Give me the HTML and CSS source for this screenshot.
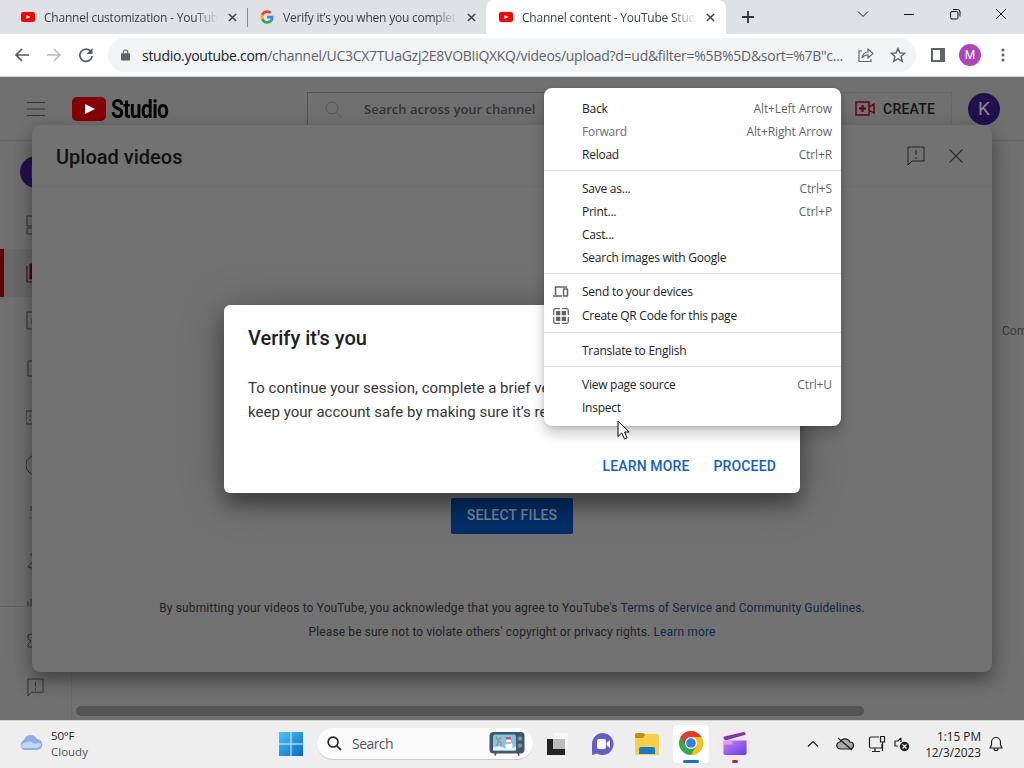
FILE: index.html
```html
<!DOCTYPE html>
<html lang="en"><head><meta charset="utf-8"><title>Channel content - YouTube Studio</title><link rel="stylesheet" href="styles.css"></head>
<body>
<svg class="defs" width="0" height="0"><defs>
<symbol id="yt" viewBox="0 0 34 24"><rect width="34" height="24" rx="5" fill="currentColor"/><path class="play" d="M13 7v10l10-5z"/></symbol>
<symbol id="x" viewBox="0 0 10 10"><path d="M1 1l8 8M9 1l-8 8"/></symbol>
<symbol id="feedback" viewBox="0 0 18 20"><path d="M1 1h16v14H5l-4 4zM9 4v5M9 11v2"/></symbol>
</defs></svg>
<header class="tabs">
 <div class="tab t1"><svg class="fav"><use href="#yt"/></svg><span class="title">Channel customization - YouTube Studio</span><svg class="close"><use href="#x"/></svg></div>
 <div class="tab t2"><svg class="fav g" viewBox="0 0 48 48"><path fill="#4285f4" d="M46 24.500c0-1.600-.1-3.100-.4-4.500H24v9h12.400a11 11 0 0 1-4.700 7v6h7.700C43.600 38 46 32 46 24.500"/><path fill="#34a853" d="M24 47c6.300 0 11.600-2 15.400-5.600l-7.700-5.900C27 39 16 39 12 28H4v6a23 23 0 0 0 20 13"/><path fill="#fbbc05" d="M12 28a14 14 0 0 1 0-8.700v-6H4a23 23 0 0 0 0 20.700z"/><path fill="#ea4335" d="M24 10c3.500 0 6.600 1.200 9 3.500l6.700-6.700C35.600 3 30.200 1 24 1A23 23 0 0 0 4 13.300l8 6C14 14 18.500 10 24 10"/></svg><span class="title">Verify it’s you when you complete sensitive</span><svg class="close"><use href="#x"/></svg></div>
 <div class="tab t3"><svg class="fav"><use href="#yt"/></svg><span class="title">Channel content - YouTube Studio</span><svg class="close"><use href="#x"/></svg></div>
 <svg class="plus" viewBox="0 0 12 12"><path d="M6 0v12M0 6h12"/></svg>
 <div class="winbtns"><svg viewBox="0 0 12 12"><path d="M1 3.500l5 5 5-5"/></svg><svg viewBox="0 0 12 12"><path d="M1 6.500h10"/></svg><svg viewBox="0 0 12 12"><rect x="1.500" y="3.500" width="7.500" height="7.500" rx="1.500"/><path d="M4 1.500h4.500q2.500 0 2.500 2.500v4.500"/></svg><svg viewBox="0 0 12 12"><path d="M1 1l10 10M11 1L1 11"/></svg></div>
</header>
<div class="toolbar">
 <div class="nav"><svg viewBox="0 0 16 16"><path d="M15 8H2M8 2L2 8l6 6"/></svg><svg class="off" viewBox="0 0 16 16"><path d="M1 8h13M8 2l6 6-6 6"/></svg><svg viewBox="0 0 16 16"><path d="M13 4.500A6.200 6.200 0 1 0 14.200 9"/><path d="M14.500 1v6h-6z" fill="#55585c" stroke="none"/></svg></div>
 <div class="url"><svg class="lock" viewBox="0 0 10 12"><path d="M1 4h8q1 0 1 1v6q0 1-1 1H1q-1 0-1-1V5q0-1 1-1z" fill="#5f6368"/><path d="M2.500 4.500V3a2.500 2.500 0 0 1 5 0v1.500" fill="none" stroke="#5f6368" stroke-width="1.200"/></svg><span class="addr"><b>studio.youtube.com</b>/channel/UC3CX7TUaGzj2E8VOBIiQXKQ/videos/upload?d=ud&amp;filter=%5B%5D&amp;sort=%7B"c...</span>
 <svg class="share" viewBox="0 0 16 16"><path d="M4 4H1v10.500h12V12M4 11q1-6 6-6V2l5 4.500-5 4.500V8Q6 8 4 11z"/></svg><svg class="star" viewBox="0 0 16 16"><path d="M8 1.500l1.900 4.400 4.800.4-3.600 3.200 1.100 4.700L8 11.700l-4.200 2.500 1.100-4.700-3.600-3.200 4.800-.4z"/></svg></div>
 <svg class="panel" viewBox="0 0 14 14"><path d="M1 1h12v12H1z" fill="none" stroke="#5f6368" stroke-width="2"/><path d="M9 1h4v12H9z" fill="#5f6368"/></svg><div class="me">M</div><svg class="dots" viewBox="0 0 4 14"><circle cx="2" cy="2" r="1.500"/><circle cx="2" cy="7" r="1.500"/><circle cx="2" cy="12" r="1.500"/></svg>
</div>
<main class="page">
 <div class="studio"><svg class="burger" viewBox="0 0 18 14"><path d="M0 .5h18M0 7h18M0 13.500h18"/></svg><svg class="logo"><use href="#yt"/></svg><strong>Studio</strong>
  <div class="search"><svg viewBox="0 0 18 18"><circle cx="8" cy="8" r="6"/><path d="M12.500 12.500l5 5"/></svg>Search across your channel</div>
  <div class="create"><svg viewBox="0 0 20 15"><path d="M1 1h13v13H1zM14 6l5-3v9l-5-3"/><path d="M7.500 4v7M4 7.500h7" stroke-width="2"/></svg>CREATE</div><div class="k">K</div></div>
 <div class="body">
  <aside class="side"><div class="k">K</div>
   <svg viewBox="0 0 20 20"><path d="M1 1h8v10H1zM1 13h8v6H1zM11 1h8v6h-8zM11 9h8v10h-8z"/></svg>
   <div class="current"><svg viewBox="0 0 20 20"><path d="M1 3v16h14"/><path d="M4 1h15v15H4z" fill="#4b0008"/></svg></div>
   <svg viewBox="0 0 20 20"><path d="M1 1h18v17H1zM6 7v6"/></svg><svg viewBox="0 0 20 20"><path d="M2 2h16v15H2z"/></svg><svg viewBox="0 0 20 20"><path d="M0 4h20v13H0zM3 9h2M3 13h2"/></svg><svg viewBox="0 0 20 20"><circle cx="10" cy="10" r="10"/></svg><svg viewBox="0 0 20 20"><path d="M5 3v5M4 15h1"/></svg><svg viewBox="0 0 20 20"><path d="M5 2v3M2 16l4-5M2 16l4 1"/></svg>
   <div class="bottom"><svg viewBox="0 0 20 20"><path d="M2 7v5M5 5v7"/></svg><svg viewBox="0 0 20 20"><path d="M6 4L2 5v4l3 2-3 3v3h4"/></svg><svg class="fb"><use href="#feedback"/></svg></div>
  </aside>
  <section class="content"><span class="col">Comments</span><i class="scroll"></i></section>
 </div>
 <section class="upload"><header><h1>Upload videos</h1><svg class="feed"><use href="#feedback"/></svg><svg class="dismiss"><use href="#x"/></svg></header>
  <div class="uploadbody"><button class="select">SELECT FILES</button><p class="terms">By submitting your videos to YouTube, you acknowledge that you agree to YouTube's <a>Terms of Service</a> and <a>Community Guidelines</a>.</p><p class="rights">Please be sure not to violate others' copyright or privacy rights. <a>Learn more</a></p></div>
 </section>
 <section class="verify"><h2>Verify it's you</h2><p class="l1">To continue your session, complete a brief ve</p><p class="l2">keep your account safe by making sure it’s re</p><footer><span class="learn">LEARN MORE</span><span class="proceed">PROCEED</span></footer></section>
</main>
<div class="taskbar">
 <div class="weather"><svg viewBox="0 0 26 18"><path d="M6 17a5.500 5.500 0 0 1 0-10 7 7 0 0 1 13-1 5.600 5.600 0 0 1 1 11z" fill="#8fadeb"/><path d="M3 12q6-5 11-3l3 2q4-2 6 0-1 4-4 4H6q-3 0-3-3z" fill="#c3d6fa"/></svg><div><span>50°F</span><span class="dim">Cloudy</span></div></div>
 <div class="apps"><svg class="win" viewBox="0 0 24 24"><defs><linearGradient id="w" x2="1" y2="1"><stop stop-color="#4cc8fb"/><stop offset="1" stop-color="#0468c4"/></linearGradient></defs><path fill="url(#w)" d="M0 0h11.500v11.500H0zM12.500 0H24v11.500H12.500zM0 12.500h11.500V24H0zM12.500 12.500H24V24H12.500z"/></svg>
 <div class="tsearch"><svg class="mag" viewBox="0 0 16 16"><circle cx="6.500" cy="6.500" r="5.300"/><path d="M10.500 10.500L15 15"/></svg><span>Search</span><svg class="tv" viewBox="0 0 36 24"><path d="M7 21l-1 3M29 21l1 3" stroke="#34495b" stroke-width="1.500"/><rect x=".5" y=".5" width="35" height="21.500" rx="4" fill="#40566b"/><rect x="4" y="3" width="23" height="16" rx="2" fill="#78c8e8"/><path d="M4 16q6-3 11 0t12-1v4H4z" fill="#e6f3f7"/><circle cx="20" cy="14" r="3.500" fill="#fff"/><circle cx="19.500" cy="9.500" r="2.500" fill="#fff"/><path d="M17 5.500h5v2.500h-5zM17 11h5v1h-5z" fill="#d5526a"/><path d="M7 5l2 4 3-3M8 15l1-5 3 1v4" fill="none" stroke="#b08a5c" stroke-width="1.300"/><circle cx="31" cy="7" r="2.300" fill="#8293a1"/><circle cx="31" cy="14" r="2.300" fill="#8293a1"/></svg></div>
 <svg class="task" viewBox="0 0 24 24"><path d="M7 1h15v15H7z" fill="#f7f7f7"/><path d="M1 7h18v16H1z" fill="#242424"/><path d="M7 7h12v10H7z" fill="#bcbcbc"/></svg>
 <svg class="chat" viewBox="0 0 24 24"><path d="M12 1a11 11 0 1 1-6 20.500L1 23V12A11 11 0 0 1 12 1z" fill="#655fbf"/><rect x="6" y="7" width="9" height="10" rx="2" fill="#fff"/><path d="M15.500 11L19 8v8l-3.500-3z" fill="#fff"/></svg>
 <svg class="folder" viewBox="0 0 26 24"><path d="M1 3q0-2 2-2h6l3 1h11q2 0 2 2v18q0 1-1 1H2q-1 0-1-1z" fill="#f8cf4b"/><path d="M1 3q0-2 2-2h6l2 2-2 3H1z" fill="#c68b0c"/><path d="M5 22v-5q0-2 2-2h12q2 0 2 2v5z" fill="#197ac3"/></svg>
 <div class="chrome"><svg viewBox="0 0 48 48"><circle cx="24" cy="24" r="24" fill="#34a853"/><path d="M3.200 12A24 24 0 0 1 44.800 12H24L13.600 30z" fill="#e33b2e"/><path d="M24 12h20.800A24 24 0 0 1 24 48l10.400-18z" fill="#fbc116"/><circle cx="24" cy="24" r="12" fill="#fff"/><circle cx="24" cy="24" r="9.500" fill="#347de4"/></svg></div>
 <div class="clip"><svg viewBox="0 0 26 26"><defs><linearGradient id="p" x2="1" y2="1"><stop stop-color="#d184ee"/><stop offset="1" stop-color="#573cec"/></linearGradient></defs><path fill="#7a3aa5" d="M1 6L22 1q2 0 2 3L3 10q-2-1-2-4z"/><path fill="url(#p)" d="M1 10h24v13q0 2-2 2H3q-2 0-2-2z"/><path fill="#efb5f6" opacity=".6" d="M1 10h9v4H1z"/></svg></div></div>
 <div class="tray"><svg class="up" viewBox="0 0 12 12"><path d="M1 8.500l5-5 5 5"/></svg><svg class="cloud" viewBox="0 0 18 14"><path d="M4.500 12a3.500 3.500 0 0 1-.5-7 5.500 5.500 0 0 1 10 0 3.500 3.500 0 0 1 0 7z" fill="#aaa"/><path d="M2 1l14 12"/></svg><svg class="net" viewBox="0 0 18 18"><path d="M11 2H3q-1.500 0-1.500 1.500v8Q1.500 13 3 13h11V9M7 13v3M4 16.500h8M12.500 1.500h4V7h-4zM14.500 7v9"/></svg><svg class="vol" viewBox="0 0 16 16"><path d="M7 2L4 5H1v5h3M7 2v4"/><circle cx="10.500" cy="10.500" r="4.700" fill="#202020" stroke="none"/><path d="M8.500 8.500l4 4M12.500 8.500l-4 4" stroke="#fff"/></svg><div class="clock"><span>1:15 PM</span><span>12/3/2023</span></div><svg class="bell" viewBox="0 0 14 16"><path d="M1 12h12l-1.500-3V6a4.500 4.500 0 0 0-9 0v3zM5 12.500a2 2 0 0 0 4 0"/></svg></div>
</div>
<nav class="menu">
 <div class="row"><span>Back</span><kbd>Alt+Left Arrow</kbd></div><div class="row disabled"><span>Forward</span><kbd>Alt+Right Arrow</kbd></div><div class="row"><span>Reload</span><kbd>Ctrl+R</kbd></div><hr>
 <div class="row"><span>Save as...</span><kbd>Ctrl+S</kbd></div><div class="row"><span>Print...</span><kbd>Ctrl+P</kbd></div><div class="row"><span>Cast...</span></div><div class="row"><span>Search images with Google</span></div><hr>
 <div class="row"><svg viewBox="0 0 16 16"><path d="M14 3H2.500v8M0 12h9" stroke-width="1.500"/><rect x="10.500" y="5" width="4" height="7" rx=".5" stroke-width="1.500"/></svg><span>Send to your devices</span></div><div class="row tall"><svg viewBox="0 0 16 16"><path d="M.7 7V2.500Q.7.700 2.500.7H7M9 .7h4.500q1.800 0 1.800 1.800V7M15.300 9v4.500q0 1.800-1.800 1.800H9M7 15.300H2.500q-1.800 0-1.800-1.800V9"/><path stroke="none" fill="#5f6368" d="M3 3h4.300v4.300H3zM8.700 3H13v4.300H8.700zM3 8.700h4.300V13H3zM8.700 8.700H13V13H8.700z"/></svg><span>Create QR Code for this page</span></div><hr class="h3">
 <div class="row"><span>Translate to English</span></div><hr><div class="row"><span>View page source</span><kbd>Ctrl+U</kbd></div><div class="row"><span>Inspect</span></div>
</nav>
<svg class="cursor" viewBox="0 0 13 20"><path d="M1 1v15.500l3.700-3.500L7.500 19l2.600-1.200L7.500 12h4.700z" fill="#fff" stroke="#000"/></svg>
</body></html>
```
FILE: styles.css
```css
*{box-sizing:border-box}
body{margin:0;width:1024px;height:768px;overflow:hidden;display:flex;flex-direction:column;font:12px "Open Sans","Noto Sans",sans-serif;color:#202124;position:relative}
svg{fill:none;stroke:none;flex:none}
.defs{position:absolute}
.tabs{height:34px;background:#dee1e6;display:flex;align-items:center;flex:none}
.tab{height:34px;display:flex;align-items:center;color:#3c4043;position:relative}
.t1{width:248px;padding-left:21px}
.t2{width:238px;padding-left:12px}
.t2::before{content:"";width:1px;height:19px;background:#85888c;position:absolute;left:-1px;top:8px}
.t3{width:240px;padding-left:13px;background:#fff;border-radius:8px 8px 0 0}
.fav{width:14px;height:10px;margin-right:9px;color:#f00;flex:none}
.play{fill:#fff}
.g{height:14px}
.title{white-space:nowrap;overflow:hidden;width:174px;letter-spacing:-.22px;-webkit-mask-image:linear-gradient(90deg,#000 150px,transparent);mask-image:linear-gradient(90deg,#000 150px,transparent)}
.close{width:9px;height:9px;stroke:#3c4043;stroke-width:1.6;margin-left:10px}
.plus{width:12px;height:12px;stroke:#303236;stroke-width:1.8;margin-left:16px}
.winbtns{display:flex;gap:34px;margin-left:auto;padding-right:17px;margin-top:-6px}
.winbtns svg{width:12px;height:12px;stroke:#111}
.toolbar{height:43px;background:#fff;display:flex;align-items:center;border-bottom:1px solid #d5d9dc;flex:none}
.nav{width:108px;padding-left:14px;display:flex;gap:16px}
.nav svg{width:16px;height:16px;stroke:#55585c;stroke-width:1.7}
.nav .off{stroke:#b9bbbd}
.url{width:808px;height:34px;border-radius:17px;background:#f1f3f4;display:flex;align-items:center;padding-left:13px}
.lock{width:9px;height:12px}
.addr{font-size:14px;letter-spacing:-.28px;color:#5f6368;margin-left:12px;width:702px;white-space:nowrap}
.addr b{font-weight:400;color:#202124}
.share{width:16px;height:16px;stroke:#5f6368;stroke-width:1.2;margin-left:14px}
.star{width:16px;height:16px;stroke:#5f6368;stroke-width:1.4;margin-left:16px}
.panel{width:14px;height:14px;margin-left:15px}
.me{width:22px;height:22px;border-radius:50%;background:#ae43bb;color:#fff;font:12px/22px Roboto,sans-serif;text-align:center;margin-left:14px}
.dots{width:4px;height:14px;fill:#5f6368;margin-left:20px}
.page{height:643px;background:#707070;position:relative;overflow:hidden;flex:none;font-family:Roboto,sans-serif}
.studio{height:64px;padding:0 24px 0 27px;display:flex;align-items:center;border-bottom:1px solid #666}
.burger{width:18px;height:14px;stroke:#333}
.logo{width:34px;height:24px;color:#850006;margin-left:27px}
.logo .play{fill:#999}
.studio strong{font:700 26px/30px Roboto,sans-serif;width:76px;transform:scaleX(.81);transform-origin:left;letter-spacing:-.8px;color:#050505;margin-left:5px}
.search{height:34px;border:1px solid #555;margin-left:120px;width:428px;display:flex;align-items:center;font:600 13px "Open Sans",sans-serif;color:#353535;gap:20px;padding-left:18px;letter-spacing:0;flex:none}
.search svg{width:18px;height:18px;stroke:#555;margin-left:-2px;margin-right:2px}
.create{width:217px;margin-right:16px;height:34px;display:flex;align-items:center;gap:8px;border:1px solid #676767;font:500 14px Roboto,sans-serif;color:#151515;padding-left:119px;letter-spacing:.25px;flex:none}
.create svg{width:20px;height:15px;stroke:#650009;stroke-width:1.4}
.k{width:32px;height:32px;border-radius:50%;background:#23104e;color:#8e8798;font:400 19px/32px Roboto,sans-serif;text-align:center;margin-left:auto;flex:none}
.body{height:579px;display:flex}
.side{width:72px;border-right:1px solid #696969;padding-top:15px;display:flex;flex-direction:column;align-items:center}
.side .k{margin:0 0 27px;color:#3b2a60}
.side svg{width:20px;height:20px;stroke:#303030;margin:0 0 28px}
.side>.current{height:48px;width:72px;margin-top:-14px;margin-bottom:14px;border-left:4px solid #650000;background:#696969;display:flex;align-items:center;justify-content:center;flex:none}
.side .current svg{stroke:#4b0008;margin:0 4px 0 0}
.side .bottom{border-top:1px solid #606060;width:100%;margin-top:7px;display:flex;flex-direction:column;align-items:center;flex:none}
.side .bottom svg{margin:-13px 0 29px}
.side .bottom .fb{width:17px;height:19px;margin:-1px 0 0}
.content{flex:1;position:relative}
.col{font-size:12px;color:#3a3a3a;display:block;margin:183px 0 0 930px}
.scroll{position:absolute;left:4px;top:565px;width:788px;height:10px;border-radius:5px;background:#545454}
.upload{position:absolute;left:32px;top:48px;width:960px;height:547px;border-radius:8px;background:#727272;box-shadow:0 8px 16px rgba(0,0,0,.34),0 6px 30px rgba(0,0,0,.12)}
.upload header{height:62px;display:flex;align-items:center;padding:0 28px 0 24px;border-bottom:1px solid #6e6e6e}
h1{font:500 20px/28px Roboto,sans-serif;color:#111;margin:2px auto 0 0}
.feed{width:18px;height:20px;stroke:#222;margin-right:23px}
.dismiss{width:16px;height:16px;stroke:#222;stroke-width:.65}
.uploadbody{display:flex;flex-direction:column;align-items:center;padding-top:311px}
.select{height:36px;width:122px;padding:0 0 2px;border:0;border-radius:2px;background:#032f69;color:#7c8795;font:500 14px Roboto,sans-serif;letter-spacing:.18px}
.upload p{font:12px/24px Roboto,sans-serif;letter-spacing:.125px;color:#222;margin:0;white-space:nowrap}
.upload .terms{margin-top:62px}
.upload a{color:#10264c}
.verify{position:absolute;left:224px;top:228px;width:576px;height:188px;border-radius:6px;background:#fff;padding:18px 24px;box-shadow:0 12px 18px rgba(0,0,0,.34),0 4px 45px rgba(0,0,0,.28)}
h2{font:500 20px/30px Roboto,sans-serif;margin:0 0 23px;color:#202020}
.verify p{font:15px/24px Roboto,sans-serif;margin:0;color:#363636;white-space:nowrap;letter-spacing:.03px}
.verify footer{display:flex;justify-content:flex-end;gap:24px;font:500 14px/20px Roboto,sans-serif;letter-spacing:.14px;color:#1260c3;margin-top:32px}
.taskbar{height:48px;background:#eee;border-top:1px solid #d2d2d2;display:flex;align-items:center;flex:none;padding-bottom:1px}
.weather{width:279px;padding-left:18px;display:flex;align-items:center;gap:7px}
.weather svg{width:26px;height:18px;margin-top:-4px}
.weather div{font-size:11.5px;line-height:16px;display:flex;flex-direction:column;letter-spacing:-.2px}
.weather .dim{color:#555;letter-spacing:0}
.apps{display:flex;align-items:center;width:476px}
.win{width:24px;height:24px}
.tsearch{height:32px;width:216px;border-radius:16px;background:#fbfbfb;margin-left:14px;display:flex;align-items:center;padding-left:10px;font-size:14px;color:#555;border-bottom:1px solid #ccc}
.mag{width:15px;height:15px;stroke:#222;stroke-width:1.7;margin-right:10px}
.tsearch span{width:137px;letter-spacing:-.55px}
.tv{width:36px;height:25px}
.task,.chat{width:24px;height:24px;margin-left:13px}
.chat{margin-left:21px}
.folder{width:26px;height:24px;margin-left:19px}
.chrome{width:36px;height:38px;border-radius:4px;background:#fff;margin-left:13px;display:flex;justify-content:center;padding-top:6px;position:relative}
.chrome svg{width:24px;height:24px}
.chrome::after{content:"";position:absolute;bottom:0;width:16px;height:3px;border-radius:2px;background:#1674ba}
.clip{width:38px;height:38px;margin-left:7px;background:radial-gradient(#fad8df,#eee 72%);border-radius:4px;display:flex;justify-content:center;padding-top:6px;position:relative}
.clip svg{width:26px;height:25px}
.clip::after{content:"";position:absolute;bottom:0;width:6px;height:3px;border-radius:2px;background:#b32632}
.tray{display:flex;align-items:center;width:269px;padding-left:52px}
.tray svg{stroke:#202020;stroke-width:1.2}
.up{width:12px;height:12px}
.cloud{width:18px;height:14px;margin-left:17px}
.net{width:18px;height:18px;margin-left:14px}
.vol{width:16px;height:16px;margin-left:8px}
.clock{width:71px;text-align:right;display:flex;flex-direction:column;line-height:16px;font-size:11.8px;letter-spacing:0}
.bell{width:14px;height:16px;margin-left:8px}
.menu{position:absolute;left:544px;top:88px;width:297px;height:338px;background:#fff;border-radius:8px;padding-top:9px;box-shadow:0 8px 14px rgba(0,0,0,.2),0 1px 4px rgba(0,0,0,.15);color:#202124}
.row{height:23px;display:flex;align-items:center;padding:0 9px 0 38px;position:relative;letter-spacing:-.25px}
.row span{margin-right:auto}
.row kbd{font:inherit;color:#62656a;letter-spacing:-.12px}
.row.disabled{color:#6d7073}
.row svg{position:absolute;left:9px;width:16px;height:16px;stroke:#5f6368;stroke-width:1.2}
.row.tall{height:25px}
hr{border:0;border-top:1px solid #dadce0;margin:4px 0 6px}
.h3{margin-bottom:6px}
.cursor{position:absolute;left:617px;top:420px;width:13px;height:20px}
```
